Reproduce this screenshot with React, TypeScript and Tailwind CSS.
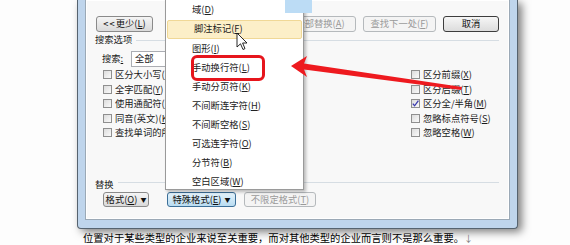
import React from "react";

const F = { fontFamily: '"Noto Sans CJK SC", "Noto Sans", sans-serif' };

function Mn({ t, k }: { t: string; k: string }) {
  return (
    <span>
      {t}(<span className="underline underline-offset-1">{k}</span>)
    </span>
  );
}

function Btn({
  children,
  w,
  kind = "normal",
  cls = "",
}: {
  children: React.ReactNode;
  w: string;
  kind?: "normal" | "disabled" | "default" | "pressed";
  cls?: string;
}) {
  const base =
    "h-full flex items-center justify-center rounded-[3px] border text-[9.3px] leading-none whitespace-nowrap overflow-hidden ";
  const k =
    kind === "disabled"
      ? "border-[#b5b9bc] bg-[#f4f4f4] text-[#9a9a9a]"
      : kind === "default"
      ? "border-[#3d3d3d] bg-gradient-to-b from-[#f6f6f6] to-[#dcdcdc] text-[#111]"
      : kind === "pressed"
      ? "border-[#3c6f98] bg-gradient-to-b from-[#e3f2fb] to-[#b9dcf1] text-[#111]"
      : "border-[#8a8a8a] bg-gradient-to-b from-[#f5f5f5] to-[#dadada] text-[#111]";
  return <div className={base + k + " " + w + " " + cls}>{children}</div>;
}

function Cb({ checked = false }: { checked?: boolean }) {
  return (
    <div className="w-[9px] h-[9px] shrink-0 border border-[#8f8f8f] bg-gradient-to-br from-[#dcdcdc] to-[#fafafa] relative">
      {checked && (
        <svg className="absolute -left-[1px] -top-[1px]" width="9" height="9" viewBox="0 0 9 9">
          <path d="M1.8 4.6 L3.6 6.8 L7.4 1.6" fill="none" stroke="#3b3bb0" strokeWidth="1.3" />
        </svg>
      )}
    </div>
  );
}

function Row({ label, checked }: { label: React.ReactNode; checked?: boolean }) {
  return (
    <div className="h-[14.5px] flex items-start">
      <Cb checked={checked} />
      <span className="ml-[3px] text-[9.3px] leading-[9px] whitespace-nowrap text-[#1a1a1a]">{label}</span>
    </div>
  );
}

export default function App() {
  const items: [string, string][] = [
    ["域", "D"],
    ["脚注标记", "F"],
    ["图形", "I"],
    ["手动换行符", "L"],
    ["手动分页符", "K"],
    ["不间断连字符", "H"],
    ["不间断空格", "S"],
    ["可选连字符", "O"],
    ["分节符", "B"],
    ["空白区域", "W"],
  ];
  return (
    <div className="w-[570px] h-[245px] relative overflow-hidden bg-[#fdfdfd] text-[#1a1a1a]" style={F}>
      {/* dialog frame */}
      <div className="ml-[77px] w-[441px] h-[229px] border-x border-b border-[#56636f] rounded-b-[4px] bg-[#bfd5ec] px-[7px] pb-[8px] shadow-[4px_3px_8px_rgba(0,0,0,0.5)]">
        <div className="h-full bg-[#f8f8f8] border-x border-b border-[#9ba9b6] shadow-[inset_0_0_0_1px_#ffffff] pl-[9px] pr-[10px] pt-[16px] flex flex-col">
          {/* row 1 */}
          <div className="h-[16px] flex justify-between">
            <Btn w="w-[57px] ml-[1px]">
              <span className="tracking-[1px]">&lt;&lt; </span>
              <Mn t="更少" k="L" />
            </Btn>
            <div className="flex gap-[7px] h-full">
              <Btn w="w-[72px]" kind="disabled">
                <Mn t="全部替换" k="A" />
              </Btn>
              <Btn w="w-[73px]" kind="disabled">
                <Mn t="查找下一处" k="F" />
              </Btn>
              <Btn w="w-[56px]" kind="default">
                取消
              </Btn>
            </div>
          </div>
          {/* search options */}
          <div className="mt-[2px] h-[12px] flex items-center">
            <span className="text-[9.3px] leading-none">搜索选项</span>
            <div className="flex-1 ml-[4px] h-px bg-[#d6dde3]" />
          </div>
          <div className="mt-[5px] h-[16px] flex items-center pl-[7px]">
            <span className="w-[29px] text-[9.3px] leading-none">
              搜索<span className="underline">:</span>
            </span>
            <div className="w-[60px] h-full border border-[#abadb3] bg-white flex items-center pl-[3px] text-[9.3px] leading-none">
              全部
            </div>
          </div>
          {/* checkboxes */}
          <div className="mt-[3px] grid grid-cols-[70px_246px_1fr]">
            <div className="pl-[8px] flex flex-col overflow-hidden">
              <Row label={<Mn t="区分大小写" k="H" />} />
              <Row label={<Mn t="全字匹配" k="Y" />} />
              <Row label={<Mn t="使用通配符" k="U" />} />
              <Row label={<Mn t="同音(英文)" k="K" />} />
              <Row label={<Mn t="查找单词的所有形式(英文)" k="W" />} />
            </div>
            <div />
            <div className="flex flex-col">
              <Row label={<Mn t="区分前缀" k="X" />} />
              <Row label={<Mn t="区分后缀" k="T" />} />
              <Row label={<Mn t="区分全/半角" k="M" />} checked />
              <Row label={<Mn t="忽略标点符号" k="S" />} />
              <Row label={<Mn t="忽略空格" k="W" />} />
            </div>
          </div>
          {/* replace */}
          <div className="mt-[37px] h-[11px] flex items-center">
            <span className="text-[9.3px] leading-none">替换</span>
            <div className="flex-1 ml-[4px] h-px bg-[#d6dde3] -mt-[5px]" />
          </div>
          <div className="mt-[1.5px] h-[15px] flex pl-[8px]">
            <Btn w="w-[46px]">
              <Mn t="格式" k="O" />
              <span className="ml-[3px] text-[6px]">▼</span>
            </Btn>
            <Btn w="w-[69px] ml-[18px]" kind="pressed">
              <Mn t="特殊格式" k="E" />
              <span className="ml-[3px] text-[6px]">▼</span>
            </Btn>
            <Btn w="w-[72px] ml-[8px]" kind="disabled">
              <Mn t="不限定格式" k="T" />
            </Btn>
          </div>
        </div>
      </div>
      {/* document text */}
      <div className="pl-[83px] pt-[3px] text-[10.3px] leading-[12px] text-black whitespace-nowrap">
        位置对于某些类型的企业来说至关重要，而对其他类型的企业而言则不是那么重要。
        <span className="text-[#777] text-[9px]">↓</span>
      </div>

      {/* dropdown menu */}
      <div className="absolute left-[165px] top-[-2px] w-[139px] h-[192px] bg-white border border-[#9a9a9a] shadow-[2px_2px_3px_rgba(0,0,0,0.25)] pt-[1.5px]">
        {items.map(([t, k], i) => (
          <div
            key={t}
            className={
              "h-[19.1px] flex items-center pl-[26px] text-[9.3px] leading-none text-[#222] " +
              (i === 1 ? "mx-[1px] bg-[#fcefc8] border border-[#f0d896] rounded-[2px] pl-[25px]" : "")
            }
          >
            <Mn t={t} k={k} />
          </div>
        ))}
      </div>

      {/* blue patch at top */}
      <div className="absolute left-[285px] top-0 w-[27px] h-[13px] bg-[#bcdcf5]" />

      {/* red highlight box */}
      <div className="absolute left-[191px] top-[55px] w-[74px] h-[26px] border-[3px] border-[#e6151c] rounded-[6px]" />

      {/* arrow and cursor */}
      <svg className="absolute left-0 top-0" width="570" height="245" viewBox="0 0 570 245">
        <polygon
          points="291,66 307,56 304,63.5 462,87 461,90 304,69.5 307,77"
          fill="#ee1a1f"
        />
        <path
          d="M237 33 L237 47 L240.5 43.8 L243 49.5 L245 48.6 L242.6 43 L247 43 Z"
          fill="#ffffff"
          stroke="#111"
          strokeWidth="0.9"
          strokeLinejoin="round"
        />
      </svg>
    </div>
  );
}
